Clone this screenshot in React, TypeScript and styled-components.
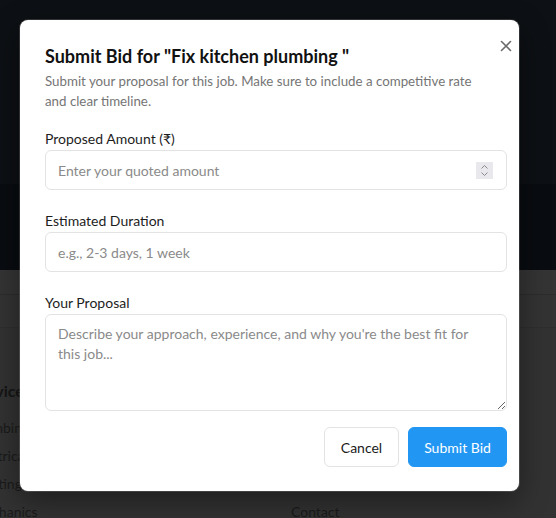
import React from "react";
import styled, { createGlobalStyle } from "styled-components";

const Global = createGlobalStyle`
  html, body { margin: 0; padding: 0; }
  body { font-family: "Lato", "Noto Sans", sans-serif; background: #333; overflow: hidden; }
  * { box-sizing: border-box; }
`;

const Page = styled.div`
  width: 556px;
  height: 518px;
  position: relative;
  overflow: hidden;
  display: flex;
  flex-direction: column;
`;

const HeroTop = styled.div`
  flex-shrink: 0;
  height: 184px;
  background: #0d1014;
`;

const HeroBottom = styled.div`
  flex-shrink: 0;
  height: 86px;
  background: #090c10;
`;

const Band = styled.div`
  flex-shrink: 0;
  height: 25px;
  background: #343434;
  border-bottom: 1px solid #2c2c2c;
`;

const Band2 = styled.div`
  flex-shrink: 0;
  height: 33px;
  background: #333;
  border-bottom: 1px solid #2e2e2e;
`;

const Footer = styled.div`
  flex: 1;
  min-height: 0;
  overflow: hidden;
  background: #323232;
  display: grid;
  grid-template-columns: 291px 1fr;
  align-content: start;
  padding-top: 53px;
  font-size: 14px;
  color: #1a1a1a;
`;

const FooterCol = styled.div<{ $offset: number }>`
  display: flex;
  flex-direction: column;
  gap: 8px;
  margin-left: ${(p) => p.$offset}px;
`;

const FooterHead = styled.div`
  font-weight: 700;
  font-size: 16px;
  line-height: 19px;
  height: 19px;
  margin-bottom: 10px;
  color: #151515;
  white-space: nowrap;
`;

const FooterLink = styled.div`
  height: 20px;
  line-height: 20px;
  white-space: nowrap;
`;

const Overlay = styled.div`
  position: absolute;
  inset: 0;
  display: flex;
  align-items: flex-start;
  justify-content: center;
  padding-top: 20px;
`;

const Modal = styled.div`
  position: relative;
  width: 499px;
  height: 471px;
  margin-left: -17px;
  background: #fff;
  border-radius: 8px;
  box-shadow: 0 0 0 1px rgba(255, 255, 255, 0.15), 0 10px 30px rgba(0, 0, 0, 0.4);
  padding: 24px 13px 24px 25px;
  display: flex;
  flex-direction: column;
`;

const Close = styled.button`
  position: absolute;
  top: 14px;
  right: 1px;
  width: 24px;
  height: 24px;
  border: none;
  background: transparent;
  padding: 0;
  display: flex;
  align-items: center;
  justify-content: center;
  cursor: pointer;
`;

const Title = styled.h2`
  margin: 0;
  font-size: 18px;
  font-weight: 700;
  color: #111;
  line-height: 24px;
`;

const Subtitle = styled.p`
  margin: 3px 0 0;
  font-size: 13.3px;
  line-height: 20px;
  color: #757575;
  padding-right: 24px;
`;

const Form = styled.div`
  margin-top: 19px;
  display: flex;
  flex-direction: column;
  gap: 22px;
`;

const Field = styled.div`
  display: flex;
  flex-direction: column;
  gap: 2px;
`;

const Label = styled.label`
  font-size: 14px;
  line-height: 18px;
  color: #1d1d1d;
`;

const InputWrap = styled.div`
  position: relative;
`;

const Input = styled.input`
  width: 462px;
  height: 40px;
  border: 1px solid #e3e3e3;
  border-radius: 6px;
  padding: 0 12px;
  font-family: inherit;
  font-size: 14px;
  color: #111;
  outline: none;
  &::placeholder { color: #8a8a8a; }
`;

const Spinner = styled.div`
  position: absolute;
  right: 13px;
  top: 12px;
  width: 17px;
  height: 17px;
  background: #e9e9ed;
  display: flex;
  align-items: center;
  justify-content: center;
`;

const TextArea = styled.textarea`
  width: 462px;
  height: 97px;
  border: 1px solid #e3e3e3;
  border-radius: 6px;
  padding: 9px 20px 8px 12px;
  font-family: inherit;
  font-size: 14px;
  line-height: 20px;
  color: #111;
  outline: none;
  resize: vertical;
  display: block;
  &::placeholder { color: #8a8a8a; }
`;

const Actions = styled.div`
  margin-top: 16px;
  display: flex;
  justify-content: flex-end;
  gap: 9px;
  width: 462px;
`;

const Button = styled.button<{ $primary?: boolean; $w: number }>`
  width: ${(p) => p.$w}px;
  height: 40px;
  padding: 0;
  border-radius: 6px;
  font-family: inherit;
  font-size: 14px;
  cursor: pointer;
  border: 1px solid ${(p) => (p.$primary ? "#2196f3" : "#e3e3e3")};
  background: ${(p) => (p.$primary ? "#2196f3" : "#fff")};
  color: ${(p) => (p.$primary ? "#fff" : "#1a1a1a")};
`;

export default function App() {
  return (
    <>
      <Global />
      <Page>
        <HeroTop />
        <HeroBottom />
        <Band />
        <Band2 />
        <Footer>
          <FooterCol $offset={-28}>
            <FooterHead>Services</FooterHead>
            <FooterLink>Plumbing</FooterLink>
            <FooterLink>Electrical</FooterLink>
            <FooterLink>Painting</FooterLink>
            <FooterLink>Mechanics</FooterLink>
          </FooterCol>
          <FooterCol $offset={0}>
            <FooterHead>&nbsp;</FooterHead>
            <FooterLink>&nbsp;</FooterLink>
            <FooterLink>&nbsp;</FooterLink>
            <FooterLink>&nbsp;</FooterLink>
            <FooterLink>Contact</FooterLink>
          </FooterCol>
        </Footer>
        <Overlay>
          <Modal>
            <Close aria-label="Close">
              <svg width="12" height="12" viewBox="0 0 12 12">
                <path d="M1.5 1.5 L10.5 10.5 M10.5 1.5 L1.5 10.5" stroke="#6b6b6b" strokeWidth="1.6" strokeLinecap="round" />
              </svg>
            </Close>
            <Title>Submit Bid for "Fix kitchen plumbing "</Title>
            <Subtitle>
              Submit your proposal for this job. Make sure to include a competitive rate and clear timeline.
            </Subtitle>
            <Form>
              <Field>
                <Label>Proposed Amount (₹)</Label>
                <InputWrap>
                  <Input type="text" placeholder="Enter your quoted amount" />
                  <Spinner>
                    <svg width="9" height="13" viewBox="0 0 9 13">
                      <path d="M1.5 4.5 L4.5 1.5 L7.5 4.5 M1.5 8.5 L4.5 11.5 L7.5 8.5" stroke="#8a8a8a" strokeWidth="1" fill="none" />
                    </svg>
                  </Spinner>
                </InputWrap>
              </Field>
              <Field>
                <Label>Estimated Duration</Label>
                <Input type="text" placeholder="e.g., 2-3 days, 1 week" />
              </Field>
              <Field>
                <Label>Your Proposal</Label>
                <TextArea placeholder="Describe your approach, experience, and why you're the best fit for this job..." />
              </Field>
            </Form>
            <Actions>
              <Button $w={75}>Cancel</Button>
              <Button $primary $w={99}>Submit Bid</Button>
            </Actions>
          </Modal>
        </Overlay>
      </Page>
    </>
  );
}
